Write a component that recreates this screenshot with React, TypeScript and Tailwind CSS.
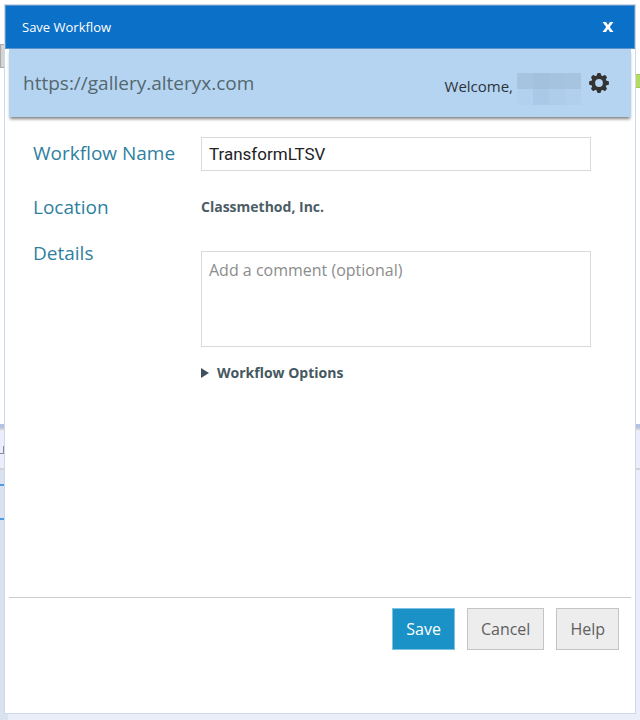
import { useState } from "react";
import type { ReactNode } from "react";

interface FieldRowProps {
  label: string;
  htmlFor?: string;
  children: ReactNode;
}

// One line of the form: a blue caption on the left, its control on the right.
function FieldRow({ label, htmlFor, children }: FieldRowProps) {
  return (
    <div className="flex items-start">
      <label htmlFor={htmlFor} className="w-42 shrink-0 text-[19px] leading-8 text-[#2f7f9f]">
        {label}
      </label>
      <div className="min-w-0 flex-1">{children}</div>
    </div>
  );
}

const TOOTH_ANGLES = [0, 45, 90, 135, 180, 225, 270, 315];

function GearIcon() {
  return (
    <svg viewBox="-10 -10 20 20" className="size-5" fill="#333333" aria-hidden>
      {TOOTH_ANGLES.map((angle) => (
        <path
          key={angle}
          d="M-2.6 -6 L-1.9 -9 Q-1.7 -9.9 -0.9 -9.9 H0.9 Q1.7 -9.9 1.9 -9 L2.6 -6 Z"
          transform={`rotate(${angle})`}
        />
      ))}
      <circle r="5.8" fill="none" stroke="#333333" strokeWidth="3.8" />
    </svg>
  );
}

// The account name is hidden behind a coarse mosaic.
function MaskedName() {
  return (
    <div aria-hidden className="grid h-8 w-16 grid-cols-4 grid-rows-2">
      <span className="bg-[#a6c4e0]" />
      <span className="bg-[#a3c1dd]" />
      <span className="bg-[#a5c3df]" />
      <span className="bg-[#a6c4e0]" />
      <span className="bg-[#b2d1ef]" />
      <span className="bg-[#a9c9e8]" />
      <span className="bg-[#adcdeb]" />
      <span className="bg-[#b1d0ee]" />
    </div>
  );
}

// Edges of the designer window that stay visible around the dialog.
function DesignerBackdrop() {
  return (
    <div aria-hidden className="absolute inset-0 flex flex-col overflow-hidden bg-white">
      <div className="flex h-106 shrink-0 justify-between">
        <div className="mt-11 h-6 w-4 border border-[#aaaaaa] bg-[#d4d4d4]" />
        <div className="mt-18.5 h-3.5 w-5 border-y border-[#a3c95a] bg-[#b5dc62]" />
      </div>
      <div className="h-1 shrink-0 bg-[#b3c3e6]" />
      <div className="h-10.5 shrink-0 border-t-2 border-b-2 border-[#d3d3d8] bg-[#e9eef9]">
        <div className="mt-4 h-2 w-1 border-r border-b border-[#8a8a9a]" />
      </div>
      <div className="flex flex-1 justify-between bg-[#e9eef9]">
        <div className="w-2 bg-[#dae2f0]">
          <div className="mt-3.5 h-9 border-y-2 border-[#4b9de6]" />
        </div>
      </div>
    </div>
  );
}

export default function App() {
  const [name, setName] = useState("TransformLTSV");
  const [comment, setComment] = useState("");

  return (
    <div className="relative flex min-h-screen flex-col px-1 pt-1 pb-1.5 font-['Open_Sans','Noto_Sans',sans-serif]">
      <DesignerBackdrop />
      <div
        role="dialog"
        aria-labelledby="dialog-title"
        className="relative flex flex-1 flex-col border border-[#ccd8ec] bg-white"
      >
        <header className="flex h-11 items-center justify-between border border-[#5f93cb] bg-[#0b70c7] pr-2.5 pl-4 text-white">
          <h1 id="dialog-title" className="text-[13px] leading-5">
            Save Workflow
          </h1>
          <button type="button" aria-label="Close" className="flex size-8 items-center justify-center">
            <svg viewBox="0 0 12 12" className="size-3" aria-hidden>
              <path d="M0.5 1 H4 L6 4 L8 1 H11.5 L7.8 6 L11.5 11 H8 L6 8 L4 11 H0.5 L4.2 6 Z" fill="#ffffff" />
            </svg>
          </button>
        </header>

        <div className="mx-1 flex h-17 items-center justify-between bg-[#b5d4f1] pr-5.5 pl-3.5 shadow-[0_3px_3px_-1px_#808080]">
          <span className="text-[19px] leading-8 text-[#53686f]">https://gallery.alteryx.com</span>
          <div className="flex items-center">
            <span className="pt-1.5 text-[15px] leading-6 text-[#2b3338]">Welcome,</span>
            <div className="ml-1 pt-3">
              <MaskedName />
            </div>
            <button type="button" aria-label="Settings" className="ml-2">
              <GearIcon />
            </button>
          </div>
        </div>

        <form className="flex flex-1 flex-col pt-5 pr-11 pl-7" id="save-form">
          <FieldRow label="Workflow Name" htmlFor="workflow-name">
            <input
              id="workflow-name"
              type="text"
              value={name}
              onChange={(e) => setName(e.target.value)}
              className="block h-8.5 w-full border border-[#d9d9d9] bg-white px-[7px] font-[Roboto,sans-serif] text-[17px] text-[#222222]"
            />
          </FieldRow>
          <div className="mt-5">
            <FieldRow label="Location">
              <p className="text-sm leading-8 font-bold text-[#4c5d66]">Classmethod, Inc.</p>
            </FieldRow>
          </div>
          <div className="mt-3.5">
            <FieldRow label="Details" htmlFor="details">
              <textarea
                id="details"
                placeholder="Add a comment (optional)"
                value={comment}
                onChange={(e) => setComment(e.target.value)}
                className="mt-3.5 block h-24 w-full resize-none border border-[#d9d9d9] bg-white px-[7px] py-1.5 text-base text-[#333333] placeholder:text-[#8c8c8c]"
              />
              <button type="button" className="mt-3.5 flex items-center gap-2 text-sm leading-6 font-bold text-[#455861]">
                <svg viewBox="0 0 8 10" className="h-2.5 w-2" aria-hidden>
                  <path d="M0 0 L8 5 L0 10 Z" fill="#3f525b" />
                </svg>
                Workflow Options
              </button>
            </FieldRow>
          </div>
        </form>

        <footer className="mx-1 flex h-29 items-start justify-end gap-3 border-t border-[#cccccc] pt-2.5 pr-3 text-base">
          <button type="submit" form="save-form" className="h-10.5 border border-[#7cc3e2] bg-[#1a92c7] px-[13px] text-white">
            Save
          </button>
          <button type="button" className="h-10.5 border border-[#c4c4c4] bg-[#ededed] px-[13px] text-[#5f5f5f]">
            Cancel
          </button>
          <button type="button" className="h-10.5 border border-[#c4c4c4] bg-[#ededed] px-[13px] text-[#5f5f5f]">
            Help
          </button>
        </footer>
      </div>
    </div>
  );
}
